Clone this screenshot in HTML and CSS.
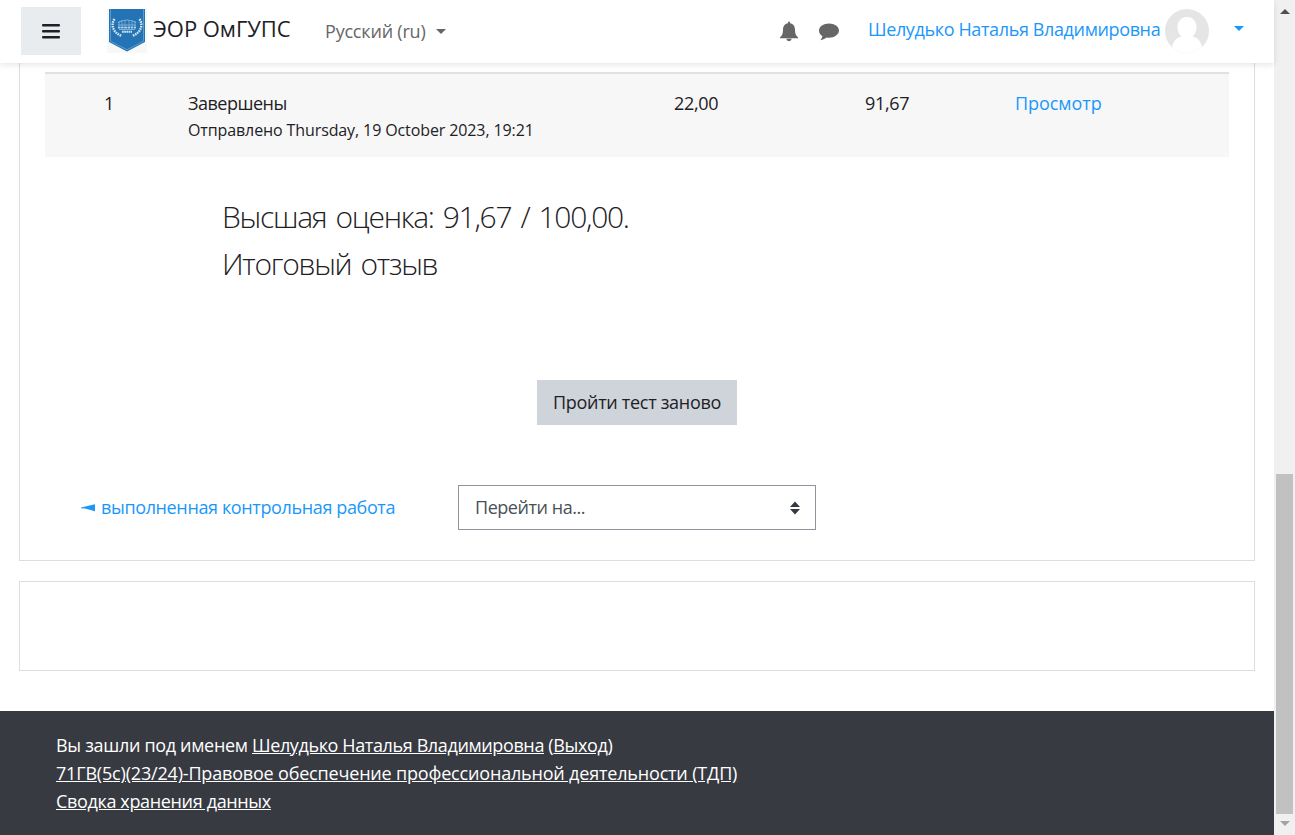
FILE: index.html
```
<!DOCTYPE html>
<html lang="ru">
<head>
<meta charset="utf-8">
<title>ЭОР ОмГУПС</title>
<link rel="stylesheet" href="styles.css">
</head>
<body>
<div class="window">
  <div class="page">
    <header class="navbar">
      <button class="menu" aria-label="Меню"><svg width="18" height="15" viewBox="0 0 18 15"><path d="M1 0h16q1 0 1 1v.4q0 1-1 1H1q-1 0-1-1V1q0-1 1-1zM1 6h16q1 0 1 1v.4q0 1-1 1H1q-1 0-1-1V7q0-1 1-1zM1 12h16q1 0 1 1v.4q0 1-1 1H1q-1 0-1-1V13q0-1 1-1z" fill="#1d2125"/></svg></button>
      <a class="brand">
        <svg width="40" height="44" viewBox="0 0 40 44">
          <path d="M0 0h40v44H0z" fill="#f8f8f7"/>
          <path d="M2 0h36v33L20 42.500 2 33z" fill="#2474b5"/>
          <path d="M3.500 0v32.300L20 40.700l16.500-8.400V0" fill="none" stroke="#6ba3d0" stroke-width=".8"/>
          <g fill="none" stroke="#d3e4f2">
            <path d="M7.500 10C3.500 16 6 24 15 27M32.500 10c4 6 1.500 14-7.500 17" stroke-width="2.400" stroke-dasharray="1.600 .8"/>
            <path d="M11 18.500h18" stroke-width="1.500" stroke-dasharray="2.500 .7"/>
            <path d="M15 22.800h10" stroke-width="2" stroke-dasharray="1.700 .5"/>
            <path d="M11 13.500q9-5 18 0M11 16h18M12 20.500h16" stroke="#7fb0da" stroke-width="1.200"/>
            <path d="M12 12v8M15 11v9M18 11v9M22 11v9M25 11v9M28 12v8" stroke="#82b2da" stroke-width=".8"/>
          </g>
        </svg>
        <span class="t brand-name">ЭОР ОмГУПС</span>
      </a>
      <div class="language"><span class="t">Русский (ru)</span><i class="caret"></i></div>
      <div class="tools">
        <svg class="bell" width="20" height="21" viewBox="0 0 20 21"><path d="M9 1.500Q9 .5 10 .5t1 1v.7c3.500.6 5 3.300 5 6.300 0 4 .8 6 3 7.800v1H1v-1c2.200-1.800 3-3.800 3-7.800 0-3 1.500-5.700 5-6.300zM7.300 17.800h5.400q-.3 2.400-2.700 2.400t-2.700-2.400z" fill="#666"/></svg>
        <svg width="20" height="18" viewBox="0 0 20 18"><path d="M10 .5c5.500 0 10 3.100 10 7.100s-4.500 7.200-10 7.200c-.9 0-1.800-.1-2.600-.2-1.700 1.500-3.700 2.400-6.100 2.700.9-1.100 1.600-2.300 2.100-4C1.200 12 0 9.900 0 7.600 0 3.600 4.500.5 10 .5z" fill="#666"/></svg>
      </div>
      <a class="user"><span class="t">Шелудько Наталья Владимировна</span>
        <svg class="avatar" width="44" height="44" viewBox="0 0 44 44"><defs><clipPath id="face"><circle cx="22" cy="22" r="22"/></clipPath></defs><g clip-path="url(#face)"><path d="M0 0h44v44H0z" fill="#e5e5e5"/><path d="M22 8c6 0 9.500 4.500 9.500 10 0 4-1.500 7.500-4 9.500 5 1 8.500 5 9.500 10.500V44H7v-6c1-5.500 4.500-9.500 9.500-10.500-2.500-2-4-5.500-4-9.500 0-5.500 3.500-10 9.500-10z" fill="#fff"/></g></svg>
        <i class="caret"></i></a>
    </header>
    <main class="content">
      <section class="card quiz">
        <div class="attempt">
          <span class="t number">1</span>
          <div class="state"><span class="t">Завершены</span><small class="t">Отправлено Thursday, 19 October 2023, 19:21</small></div>
          <span class="t points">22,00</span>
          <span class="t grade">91,67</span>
          <a class="t review">Просмотр</a>
        </div>
        <div class="result">
          <h3 class="t best">Высшая оценка: 91,67 / 100,00.</h3>
          <h3 class="t feedback">Итоговый отзыв</h3>
        </div>
        <button class="retry"><span class="t">Пройти тест заново</span></button>
        <div class="activity-nav">
          <a class="previous"><svg width="14" height="8" viewBox="0 0 14 8"><path d="M0 3.500 14 .3v7L4 4.500 0 4.200z" fill="#1a97fb"/></svg><span class="t">выполненная контрольная работа</span></a>
          <div class="jump"><span class="t">Перейти на...</span><svg width="10" height="14" viewBox="0 0 10 14"><path d="M5 .5 10 6H0zM0 8h10L5 13.500z" fill="#343a40"/></svg></div>
        </div>
      </section>
      <section class="card empty"></section>
    </main>
    <footer class="footer">
      <div><span class="t login">Вы зашли под именем <u>Шелудько Наталья Владимировна</u> (<u>Выход</u>)</span></div>
      <div><u class="t course">71ГВ(5с)(23/24)-Правовое обеспечение профессиональной деятельности (ТДП)</u></div>
      <div><u class="t data">Сводка хранения данных</u></div>
    </footer>
  </div>
  <div class="scrollbar"><i class="up"></i><i class="thumb"></i><i class="down"></i></div>
</div>
</body>
</html>
```
FILE: styles.css
```
* { box-sizing: border-box; }
body { margin: 0; background: #fff; color: #1d2125; font: 18px/28px "Open Sans", "Noto Sans", sans-serif; }
button { border: 0; padding: 0; font: inherit; color: inherit; }
svg { display: block; flex: none; }
.t { white-space: nowrap; }
.window { display: flex; width: 1295px; height: 835px; overflow: hidden; }
.page { width: 1274px; display: flex; flex-direction: column; }
.navbar { position: relative; flex: none; height: 63px; display: flex; align-items: flex-start; background: #fff; box-shadow: 0 2px 6px rgba(0,0,0,.1); }
.menu { width: 60px; height: 48px; margin: 7px 0 0 21px; display: grid; place-items: center; background: #e9ecef; }
.brand { display: flex; width: 218px; margin: 9px 0 0 26px; }
.brand-name { font-size: 22px; line-height: 32px; margin: 3px 0 0 6px; letter-spacing: -.05px; }
.language { display: flex; align-items: center; width: 454px; margin-top: 17px; color: #666; letter-spacing: -.2px; }
.language .caret { margin-left: 10px; }
.caret { border: 5px solid transparent; border-top-color: currentColor; border-bottom: 0; }
.tools { display: flex; width: 89px; gap: 20px; margin-top: 21px; }
.tools svg + svg { margin-top: 2px; }
.user { display: flex; width: 406px; color: #1a97fb; }
.user .t { width: 293px; margin: 15px 4px 0 0; letter-spacing: -.37px; }
.user .avatar { margin-top: 9px; }
.user .caret { margin: 26px 0 0 25px; }
.content { flex: none; height: 648px; padding: 0 19px; }
.card { border: 1px solid #dedede; }
.quiz { height: 498px; border-top: 0; padding: 9px 25px 0; }
.attempt { display: flex; height: 85px; padding: 15px 0 0 59px; background: #f7f7f7; border-top: 2px solid #dee2e6; }
.number { width: 84px; }
.state { width: 486px; display: flex; flex-direction: column; letter-spacing: -.5px; }
.state small { font-size: 16px; line-height: 27px; letter-spacing: -.11px; }
.points { width: 191px; letter-spacing: -.3px; }
.grade { width: 150px; letter-spacing: -.35px; }
.review, .previous { color: #1a97fb; }
.review { letter-spacing: -.05px; }
.result { padding: 41px 0 0 177px; height: 223px; }
.result h3 { margin: 0 0 9px; font-size: 30px; line-height: 38px; font-weight: 300; }
.best { letter-spacing: -1.28px; word-spacing: 2.6px; }
.feedback { letter-spacing: -1.27px; word-spacing: 2.6px; }
.retry { display: grid; place-items: center; width: 200px; height: 45px; margin-left: 492px; padding-bottom: 2px; background: #ced4da; letter-spacing: -.3px; }
.activity-nav { display: flex; align-items: center; margin-top: 60px; padding-left: 36px; }
.previous { display: flex; align-items: center; width: 377px; gap: 6px; letter-spacing: -.37px; }
.jump { display: flex; align-items: center; justify-content: space-between; width: 358px; height: 45px; border: 1px solid #8f959e; padding: 0 15px 0 16px; color: #495057; letter-spacing: -.45px; }
.previous .t, .jump .t { padding-bottom: 2px; }
.empty { height: 90px; margin-top: 20px; }
.footer { flex: 1; padding: 20px 56px; color: #fff; background: #373a41; }
.login { letter-spacing: -.32px; }
.login u { letter-spacing: -.38px; }
.course { letter-spacing: -.18px; }
.data { letter-spacing: -.35px; }
.scrollbar { width: 21px; padding: 9px 2px 7px; background: #f0f0f0; display: flex; flex-direction: column; align-items: center; }
.scrollbar .up { border: 5px solid transparent; border-top: 0; border-bottom-color: #505050; }
.scrollbar .thumb { width: 17px; height: 340px; margin-top: 460px; background: #c1c1c1; }
.scrollbar .down { margin-top: 7px; border: 5px solid transparent; border-bottom: 0; border-top-color: #a3a3a3; }
```
